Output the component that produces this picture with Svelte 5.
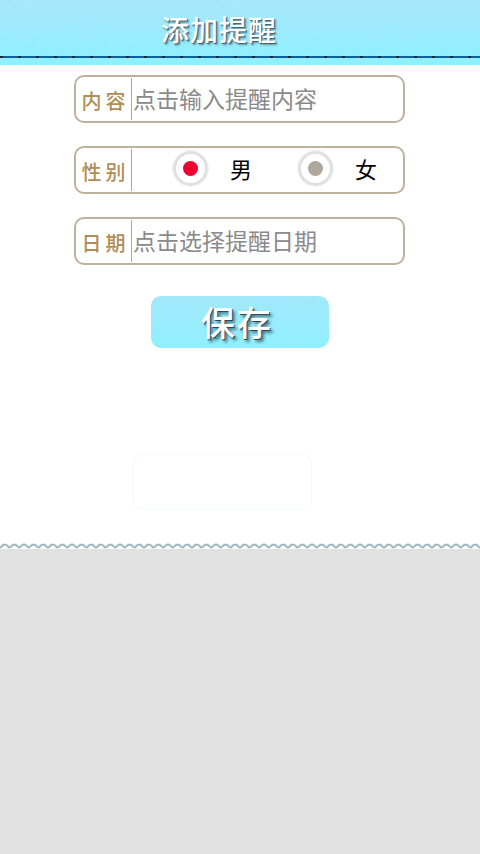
<script>
  const rows = [
    { id: 'content', label: '内容', placeholder: '点击输入提醒内容' },
    { id: 'gender', label: '性别' },
    { id: 'date', label: '日期', placeholder: '点击选择提醒日期' }
  ];
</script>

<div class="page">
  <header class="top">
    <h1>添加提醒</h1>
    <div class="stitch"></div>
  </header>

  <main class="panel">
    <div class="form">
      {#each rows as row}
        <div class="row">
          <span class="label"><span class="label-text">{row.label}</span></span>
          {#if row.placeholder}
            <span class="hint">{row.placeholder}</span>
          {:else}
            <div class="radios">
              <div class="radio">
                <span class="ring"><span class="dot on"></span></span>
                <span class="opt">男</span>
              </div>
              <div class="radio">
                <span class="ring"><span class="dot"></span></span>
                <span class="opt">女</span>
              </div>
            </div>
          {/if}
        </div>
      {/each}
    </div>

    <button class="save">保存</button>
    <div class="ghost"></div>
  </main>

  <svg class="wave" width="480" height="6" viewBox="0 0 480 6">
    <defs>
      <pattern id="scallop" width="9.6" height="6" patternUnits="userSpaceOnUse">
        <path d="M0 4.5 C2 4.5 2 1.5 4.8 1.5 C7.6 1.5 7.6 4.5 9.6 4.5" fill="none" stroke="#9fb2bf" stroke-width="2" />
      </pattern>
    </defs>
    <rect width="480" height="6" fill="url(#scallop)" />
  </svg>

  <div class="rest"></div>
</div>

<style>
  :global(body) {
    margin: 0;
  }

  .page {
    width: 480px;
    height: 854px;
    display: flex;
    flex-direction: column;
    background: #fff;
    font-family: "Noto Sans CJK SC", "Liberation Sans", sans-serif;
  }

  .top {
    height: 65px;
    box-sizing: border-box;
    padding-top: 9px;
    background:
      repeating-linear-gradient(135deg, rgba(255, 255, 255, 0.08) 0 1px, transparent 1px 3px),
      linear-gradient(#a6e6fb, #8bf0fe);
  }

  .top h1 {
    margin: -2px 0 0 161px;
    height: 41px;
    font-size: 28px;
    font-weight: 500;
    line-height: 44px;
    letter-spacing: 1px;
    color: #fff;
    text-shadow: 1px 1px 0 #4a656f, 2px 2px 2px rgba(50, 80, 90, 0.6);
  }

  .stitch {
    margin-top: 8px;
    height: 2px;
    background:
      repeating-linear-gradient(90deg, #1a2a33 0 3px, transparent 3px 18px),
      #0d5f9e;
  }

  .panel {
    height: 478px;
    box-sizing: border-box;
    padding-top: 10px;
    display: flex;
    flex-direction: column;
  }

  .form {
    margin-left: 74px;
    width: 331px;
    display: flex;
    flex-direction: column;
    gap: 23px;
  }

  .row {
    height: 48px;
    box-sizing: border-box;
    border: 2px solid #bfb29c;
    border-radius: 10px;
    display: flex;
    align-items: center;
    padding: 1px 0;
  }

  .label {
    width: 55px;
    height: 100%;
    flex: none;
    border-right: 1px solid #c2a673;
    display: flex;
    align-items: center;
    justify-content: center;
    font-size: 20px;
    line-height: 26px;
    letter-spacing: 4px;
    text-indent: 4px;
    color: #b08d55;
    font-weight: 500;
  }

  .label-text {
    margin-top: 3px;
  }

  .hint {
    margin: -3px 0 0 1px;
    font-size: 23px;
    color: #8a8a8a;
    white-space: nowrap;
  }

  .radios {
    display: flex;
    margin-left: 41px;
    gap: 35px;
  }

  .radio {
    width: 90px;
    display: flex;
    align-items: center;
    margin-top: -3px;
  }

  .ring {
    width: 35px;
    height: 35px;
    box-sizing: border-box;
    border: 3px solid #e0e0e0;
    outline: 1px dotted #e6e6e6;
    border-radius: 50%;
    display: flex;
    align-items: center;
    justify-content: center;
    flex: none;
  }

  .dot {
    width: 15px;
    height: 15px;
    border-radius: 50%;
    background: #b0a79c;
  }

  .dot.on {
    background: #f0002e;
  }

  .opt {
    margin: -2px 0 0 22px;
    font-size: 22px;
    color: #000;
  }

  .save {
    margin: 31px 0 0 151px;
    width: 178px;
    height: 52px;
    border: none;
    border-radius: 10px;
    padding: 0 6px 0 0;
    background:
      repeating-linear-gradient(135deg, rgba(255, 255, 255, 0.08) 0 1px, transparent 1px 3px),
      linear-gradient(#a0e7fb, #8cf0fe);
    font-family: inherit;
    font-size: 34px;
    font-weight: 500;
    line-height: 50px;
    letter-spacing: 2px;
    color: #fff;
    text-shadow: 1px 1px 0 #2f4a52, 3px 3px 3px rgba(40, 70, 80, 0.7);
  }

  .ghost {
    margin: 106px 0 0 133px;
    width: 179px;
    height: 56px;
    box-sizing: border-box;
    border: 1px solid #f3f8f9;
    border-radius: 10px;
  }

  .wave {
    display: block;
    flex: none;
  }

  .rest {
    flex: 1;
    background: #e1e1e1;
  }
</style>
